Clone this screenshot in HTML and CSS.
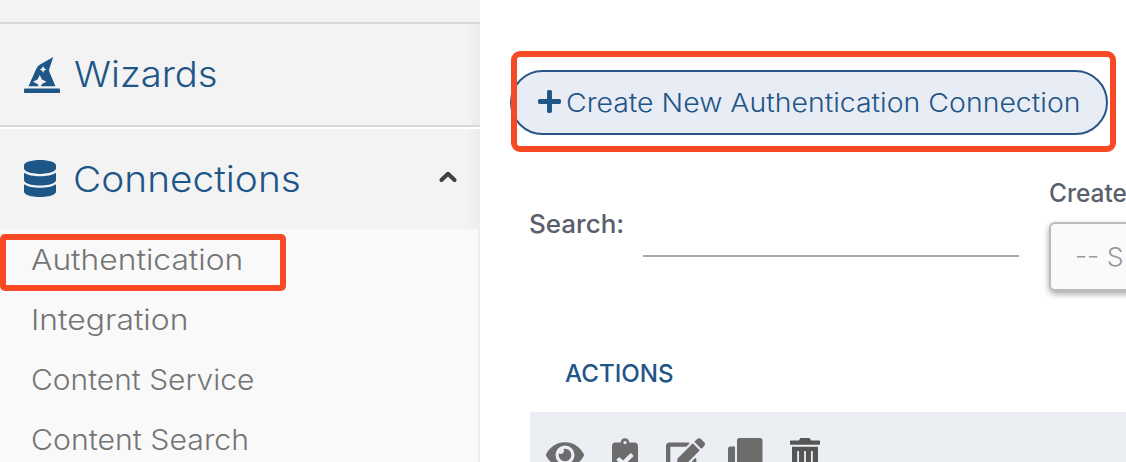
FILE: index.html
```html
<!DOCTYPE html>
<html lang="en">
<head>
<meta charset="utf-8">
<title>Connections</title>
<link rel="stylesheet" href="styles.css">
</head>
<body>
<div class="app">
  <nav class="sidebar">
    <div class="strip"></div>
    <div class="group wizards">
      <svg class="group-icon" width="36" height="36" viewBox="0 0 512 512"><path d="M496 448H16c-8.840 0-16 7.160-16 16v32c0 8.840 7.160 16 16 16h480c8.840 0 16-7.160 16-16v-32c0-8.840-7.160-16-16-16zm-304-64l-64-32 64-32 32-64 32 64 64 32-64 32-16 32h208l-86.410-201.630a63.955 63.955 0 0 1-1.890-45.450L416 0 228.420 107.190a127.989 127.989 0 0 0-53.460 59.150L64 416h144l-16-32zm64-224l16-32 16 32 32 16-32 16-16 32-16-32-32-16 32-16z"/></svg>
      <span class="group-label label-wizards">Wizards</span>
    </div>
    <div class="group connections">
      <svg class="group-icon" width="32" height="37" viewBox="0 0 448 512" preserveAspectRatio="none"><path d="M448 73.143v45.714C448 159.143 347.667 192 224 192S0 159.143 0 118.857V73.143C0 32.857 100.333 0 224 0s224 32.857 224 73.143zM448 176v102.857C448 319.143 347.667 352 224 352S0 319.143 0 278.857V176c48.125 33.143 136.208 48.572 224 48.572S399.874 209.143 448 176zm0 160v102.857C448 479.143 347.667 512 224 512S0 479.143 0 438.857V336c48.125 33.143 136.208 48.572 224 48.572S399.874 369.143 448 336z"/></svg>
      <span class="group-label label-connections">Connections</span>
      <svg class="caret" width="18" height="12" viewBox="0 0 18 12"><path d="M2.500 9 9 2.800 15.500 9"/></svg>
    </div>
    <div class="submenu">
      <a class="item"><span class="item-authentication">Authentication</span></a>
      <a class="item"><span class="item-integration">Integration</span></a>
      <a class="item"><span class="item-service">Content Service</span></a>
      <a class="item"><span class="item-search">Content Search</span></a>
    </div>
    <div class="callout callout-menu"></div>
  </nav>
  <main class="main">
    <button class="create">
      <svg width="23" height="23" viewBox="0 32 448 448"><path d="M416 208H272V64c0-17.670-14.330-32-32-32h-32c-17.670 0-32 14.330-32 32v144H32c-17.670 0-32 14.330-32 32v32c0 17.670 14.330 32 32 32h144v144c0 17.670 14.330 32 32 32h32c17.670 0 32-14.330 32-32V304h144c17.670 0 32-14.330 32-32v-32c0-17.670-14.330-32-32-32z"/></svg>
      <span class="create-label">Create New Authentication Connection</span>
    </button>
    <div class="filters">
      <div class="search-cell"><label class="field-label search-label">Search:</label></div>
      <div class="search-input"></div>
      <div class="created">
        <label class="field-label created-label">Create</label>
        <div class="select"><span>-- S</span></div>
      </div>
    </div>
    <div class="thead"><span>ACTIONS</span></div>
    <div class="row">
      <svg class="eye" width="38" height="34" viewBox="0 0 576 512"><path d="M572.520 241.400C518.290 135.590 410.930 64 288 64S57.680 135.640 3.480 241.410a32.350 32.350 0 0 0 0 29.190C57.710 376.410 165.070 448 288 448s230.320-71.640 284.520-177.410a32.350 32.350 0 0 0 0-29.190zM288 400a144 144 0 1 1 144-144 143.930 143.930 0 0 1-144 144zm0-240a95.310 95.310 0 0 0-25.310 3.790 47.850 47.850 0 0 1-66.900 66.900A95.780 95.780 0 1 0 288 160z"/></svg>
      <svg class="check" width="26" height="35" viewBox="0 0 384 512"><path d="M336 64h-80c0-35.300-28.700-64-64-64s-64 28.700-64 64H48C21.500 64 0 85.500 0 112v352c0 26.500 21.500 48 48 48h288c26.500 0 48-21.500 48-48V112c0-26.500-21.500-48-48-48zM192 40c13.300 0 24 10.700 24 24s-10.700 24-24 24-24-10.700-24-24 10.700-24 24-24zm121.200 231.800l-143 141.800c-4.700 4.700-12.300 4.600-17-.1l-82.600-83.300c-4.700-4.700-4.600-12.300.1-17L99.100 285c4.700-4.700 12.300-4.600 17 .1l46 46.400 106-105.200c4.700-4.700 12.300-4.600 17 .1l28.200 28.400c4.700 4.800 4.600 12.300-.1 17z"/></svg>
      <svg class="edit" width="39" height="35" viewBox="0 0 576 512"><path d="M402.600 83.200l90.200 90.200c3.800 3.800 3.800 10 0 13.800L274.400 405.600l-92.800 10.300c-12.400 1.400-22.900-9.100-21.500-21.500l10.300-92.800L388.800 83.200c3.800-3.800 10-3.800 13.800 0zm162-22.900l-48.800-48.800c-15.200-15.200-39.900-15.200-55.200 0l-35.400 35.400c-3.800 3.800-3.800 10 0 13.800l90.200 90.200c3.800 3.800 10 3.800 13.800 0l35.400-35.400c15.200-15.300 15.200-40 0-55.200zM384 346.200V448H64V128h229.800c3.200 0 6.200-1.300 8.500-3.500l40-40c7.600-7.600 2.200-20.500-8.500-20.500H48C21.500 64 0 85.500 0 112v352c0 26.500 21.500 48 48 48h352c26.500 0 48-21.500 48-48V306.200c0-10.700-12.900-16-20.500-8.500l-40 40c-2.200 2.300-3.500 5.300-3.500 8.500z"/></svg>
      <svg class="clone" width="35" height="35" viewBox="0 0 35 35"><path d="M11.500 0H32a2.500 2.500 0 0 1 2.500 2.500V24a2.500 2.500 0 0 1-2.500 2.500H11.500A2.500 2.500 0 0 1 9 24V2.500A2.500 2.500 0 0 1 11.500 0zM2.500 8.500H7V28h19v4.500a2.500 2.500 0 0 1-2.500 2.500h-21A2.500 2.500 0 0 1 0 32.500V11a2.500 2.500 0 0 1 2.500-2.500z"/></svg>
      <svg class="trash" width="30" height="36" viewBox="0 0 30 36"><path d="M10.500 0h9l1.700 2.500H29a1 1 0 0 1 1 1V6a.7.7 0 0 1-.7.7H.7A.7.7 0 0 1 0 6V3.500a1 1 0 0 1 1-1h7.800zM2 8.700h26V33a3 3 0 0 1-3 3H5a3 3 0 0 1-3-3zM7.200 13v19H9V13zm6.900 0v19h1.800V13zm6.900 0v19h1.800V13z" fill-rule="evenodd"/></svg>
    </div>
    <div class="callout callout-create"></div>
  </main>
</div>
</body>
</html>
```
FILE: styles.css
```css
* { box-sizing: border-box; }
body { margin: 0; background: #fff; font-family: Inter, "Liberation Sans", sans-serif; }
svg { display: block; flex: none; fill: currentColor; }
span, label { display: inline-block; white-space: nowrap; transform-origin: 0 50%; }
.app { display: flex; width: 1126px; height: 462px; overflow: hidden; }

.sidebar { position: relative; flex: none; width: 480px; height: 462px; overflow: hidden; color: #1f5688; }
.strip { height: 24px; background: #f3f3f3; border-bottom: 2px solid #d9d9d9; }
.group { display: flex; align-items: center; padding-left: 24px; background: linear-gradient(90deg, #f3f3f3 466px, #ececec); }
.wizards { height: 103px; border-bottom: 2px solid #d9d9d9; }
.connections { height: 100px; margin-top: 2px; }
.group-label { font-size: 35.500px; font-weight: 300; line-height: 44px; }
.label-wizards { margin-left: 14px; transform: scaleX(1.078); }
.label-connections { margin: 2px 0 0 17px; transform: scaleX(1.094); }
.connections .group-icon { margin-top: -2px; }
.caret { margin-left: auto; margin-right: 23px; margin-top: -5px; fill: none; stroke: #3f3f3f; stroke-width: 4; stroke-linecap: round; stroke-linejoin: round; }
.submenu { height: 240px; background: #f9f9f9; border-right: 2px solid #eee; }
.item { display: flex; align-items: center; height: 60px; padding: 1px 0 0 31px; color: #757575; font-size: 28px; font-weight: 300; }
.item-authentication { transform: scaleX(1.135); }
.item-integration { transform: scaleX(1.137); }
.item-service { transform: scaleX(1.069); }
.item-search { transform: scaleX(1.080); }

.callout { position: absolute; border: 6px solid #f64924; pointer-events: none; }
.callout-menu { left: 0; top: 234px; width: 286px; height: 57px; border-radius: 5px; }
.callout-create { left: 31px; top: 51px; width: 605px; height: 101px; border-radius: 9px; }

.main { position: relative; flex: none; width: 646px; height: 462px; padding: 70px 0 0 30px; overflow: hidden; }
.create { display: flex; align-items: center; width: 598px; height: 65px; padding: 0 0 2px 26px; border: 2px solid #2a5587; border-radius: 33px; background: #e8ecf4; color: #1f5688; font: 300 26px Inter, "Liberation Sans", sans-serif; }
.create-label { margin-left: 5px; padding-top: 1px; transform: scaleX(1.094); }
.filters { display: flex; align-items: flex-start; height: 122px; margin-top: 43px; padding-left: 19px; }
.field-label { color: #5a606b; font-size: 25.500px; font-weight: 500; line-height: 32px; }
.search-cell { flex: none; width: 114px; padding-top: 30px; }
.search-label { transform: scaleX(1.020); }
.search-input { flex: none; width: 376px; height: 79px; border-bottom: 2px solid #a9a9a9; }
.created { flex: none; width: 180px; margin-left: 30px; }
.created-label { display: block; width: 90px; margin-top: -1px; transform: scaleX(.96); }
.select { height: 69px; margin-top: 13px; padding: 17px 24px; border: 2px solid #bbb; border-radius: 6px; background: #fafafa; box-shadow: 0 3px 6px rgba(0,0,0,.35); color: #999; font-size: 26px; font-weight: 300; line-height: 31px; }
.select span { transform: scaleX(1.030); }
.thead { height: 112px; padding: 57px 0 0 55px; color: #1f5688; font-size: 24.500px; font-weight: 500; line-height: 32px; }
.thead span { transform: scaleX(.985); }
.row { display: flex; align-items: flex-start; width: 640px; height: 80px; margin-left: 20px; padding: 26px 0 0 16px; background: #ebeff3; color: #6c6c6c; }
.check { margin-left: 28px; }
.edit { margin-left: 28px; }
.clone { margin-left: 23px; }
.trash { margin-left: 27px; color: #555; }
```
